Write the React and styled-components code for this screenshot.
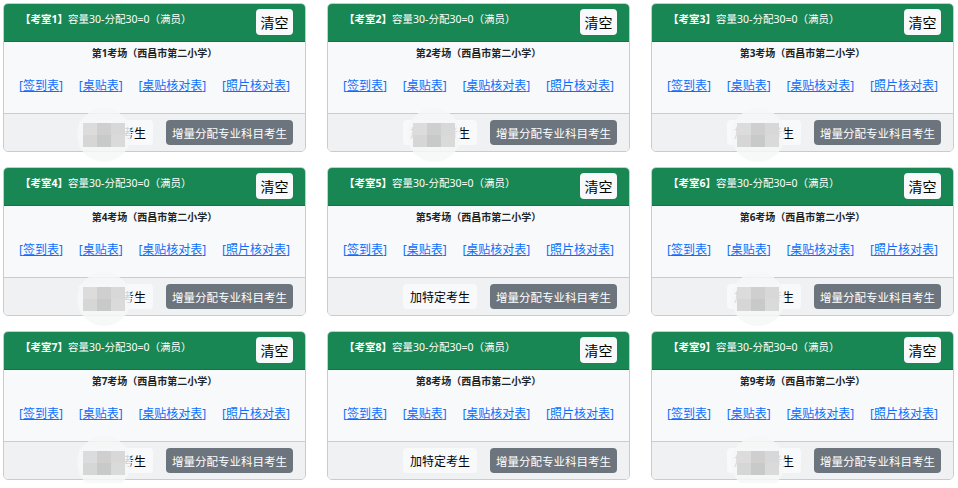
import React from "react";
import styled, { createGlobalStyle } from "styled-components";

const GlobalStyle = createGlobalStyle`
    body {
        margin: 0;
        background: #ffffff;
        font-family: "Noto Sans", "Noto Sans CJK SC", sans-serif;
    }
`;

const Grid = styled.div`
    display: grid;
    grid-template-columns: repeat(3, 303px);
    column-gap: 21px;
    row-gap: 15px;
    padding: 3px;
`;

const Card = styled.div`
    position: relative;
    height: 149px;
    border: 1px solid #c9cbcd;
    border-radius: 5px;
    background: #f8f9fa;
    display: flex;
    flex-direction: column;
    box-sizing: border-box;
`;

const Header = styled.div`
    background: #198754;
    color: #ffffff;
    height: 38px;
    display: flex;
    justify-content: space-between;
    align-items: flex-start;
    padding: 0 12px 0 16px;
    box-sizing: border-box;
    border-bottom: 1px solid #157347;
    border-radius: 4px 4px 0 0;
`;

const Title = styled.div`
    font-size: 10.5px;
    line-height: 14px;
    margin-top: 8px;
    b {
        font-weight: 700;
    }
`;

const ClearButton = styled.button`
    margin-top: 5px;
    width: 37px;
    height: 26px;
    border: none;
    border-radius: 4px;
    background: #f8f9fa;
    color: #000;
    font-family: inherit;
    font-size: 14px;
    padding: 0;
`;

const Body = styled.div`
    flex: 1;
    display: flex;
    flex-direction: column;
    align-items: center;
    padding-top: 4px;
`;

const RoomName = styled.div`
    font-size: 10px;
    font-weight: 700;
    color: #212529;
    line-height: 15px;
`;

const Links = styled.div`
    align-self: stretch;
    display: flex;
    justify-content: space-between;
    padding: 0 15px 0 15px;
    margin-top: 17px;
    font-size: 12px;
    color: #0d6efd;
    line-height: 16px;
    a {
        color: #0d6efd;
        text-decoration: underline;
    }
`;

const Footer = styled.div`
    height: 38px;
    border-top: 1px solid #c9cbcd;
    background: #f0f1f2;
    display: flex;
    justify-content: flex-end;
    align-items: center;
    gap: 13px;
    padding: 0 12px;
    box-sizing: border-box;
    border-radius: 0 0 4px 4px;
`;

const LightButton = styled.button`
    height: 25px;
    padding: 0 7px;
    border: none;
    border-radius: 4px;
    background: #f8f9fa;
    color: #000;
    font-family: inherit;
    font-size: 12px;
`;

const GreyButton = styled.button`
    height: 25px;
    width: 127px;
    padding: 0;
    border: none;
    border-radius: 4px;
    background: #6c757d;
    color: #fff;
    font-family: inherit;
    font-size: 11.5px;
`;

const Mosaic = styled.div`
    position: absolute;
    left: ${(p) => p.$x}px;
    top: 104px;
    width: 54px;
    height: 54px;
    border-radius: 50%;
    background: rgba(246, 247, 247, 0.85);
    display: flex;
    align-items: center;
    justify-content: center;
    pointer-events: none;
`;

const Blocks = styled.div`
    display: grid;
    grid-template-columns: repeat(3, 14px);
    grid-template-rows: repeat(2, 12px);
    span:nth-child(1) { background: #dcdcdc; }
    span:nth-child(2) { background: #cfcfcf; }
    span:nth-child(3) { background: #d8d8d8; }
    span:nth-child(4) { background: #d6d6d6; }
    span:nth-child(5) { background: #c8c9c9; }
    span:nth-child(6) { background: #dadada; }
`;

const rooms = [1, 2, 3, 4, 5, 6, 7, 8, 9];
const hidden = { 1: 73, 2: 79, 3: 79, 4: 73, 6: 79, 7: 73, 9: 79 };

const Room = ({ n }) => (
    <Card>
        <Header>
            <Title>
                <b>【考室{n}】</b>容量30-分配30=0（满员）
            </Title>
            <ClearButton>清空</ClearButton>
        </Header>
        <Body>
            <RoomName>第{n}考场（西昌市第二小学）</RoomName>
            <Links>
                <span>[<a href="#">签到表</a>]</span>
                <span>[<a href="#">桌贴表</a>]</span>
                <span>[<a href="#">桌贴核对表</a>]</span>
                <span>[<a href="#">照片核对表</a>]</span>
            </Links>
        </Body>
        <Footer>
            <LightButton>加特定考生</LightButton>
            <GreyButton>增量分配专业科目考生</GreyButton>
        </Footer>
        {hidden[n] ? (
            <Mosaic $x={hidden[n]}>
                <Blocks>
                    <span /><span /><span /><span /><span /><span />
                </Blocks>
            </Mosaic>
        ) : null}
    </Card>
);

export default function App() {
    return (
        <>
            <GlobalStyle />
            <Grid>
                {rooms.map((n) => (
                    <Room key={n} n={n} />
                ))}
            </Grid>
        </>
    );
}
